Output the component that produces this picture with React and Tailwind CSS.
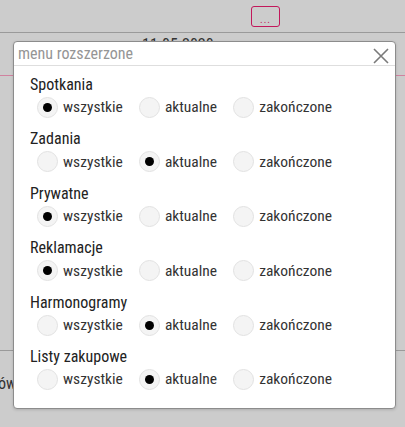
import React, { useState } from "react";

const sections = [
  { name: "Spotkania", value: "wszystkie" },
  { name: "Zadania", value: "aktualne" },
  { name: "Prywatne", value: "wszystkie" },
  { name: "Reklamacje", value: "wszystkie" },
  { name: "Harmonogramy", value: "aktualne" },
  { name: "Listy zakupowe", value: "aktualne" },
];

const options = ["wszystkie", "aktualne", "zakończone"];

function Radio({ checked, label, onClick }) {
  return (
    <button type="button" onClick={onClick} className="flex items-center gap-[5px]">
      <span className="w-[21px] h-[21px] rounded-full bg-[#f4f4f4] border border-[#e2e2e2] flex items-center justify-center">
        {checked && <span className="w-[9px] h-[9px] rounded-full bg-black" />}
      </span>
      <span className="text-[15.5px] leading-[22px] text-[#333]">{label}</span>
    </button>
  );
}

export default function App() {
  const [values, setValues] = useState(sections.map((s) => s.value));

  return (
    <div className="relative w-[405px] h-[427px] bg-[#cccccc] overflow-hidden font-['Roboto_Condensed','Roboto',sans-serif]">
      {/* tło: lista pod oknem */}
      <div className="h-[33px] border-b border-[#9a9a9a] flex items-start">
        <button className="ml-[251px] mt-[6px] w-[29px] h-[21px] rounded-[3px] border border-[#c2185b] text-[#c2185b] text-[10px] leading-[26px] tracking-[1px]">
          ...
        </button>
      </div>
      <div className="h-[43px] border-b border-[#d0829f] pl-[142px] pt-[3px] text-[16px] leading-[18px] text-[#333]">
        11.05.2020 r.
      </div>
      <div className="h-[275px] border-b border-[#9a9a9a]" />
      <div className="pt-[24px] -ml-[2px] text-[16px] leading-[18px] text-[#333]">ów</div>

      {/* menu rozszerzone */}
      <div className="absolute left-[13px] top-[41px] w-[383px] h-[368px] bg-white border border-[#8c8c8c] rounded-[4px] shadow-[0_1px_3px_rgba(0,0,0,0.15)]">
        <div className="h-[24px] border-b border-[#dedede] flex items-center justify-between pl-[4px] pr-[6px]">
          <span className="text-[16px] leading-[18px] text-[#959595]">menu rozszerzone</span>
          <button type="button" className="w-[16px] h-[16px] mt-[4px]">
            <svg viewBox="0 0 16 16" className="w-[16px] h-[16px]" stroke="#7a7a7a" strokeWidth="1.6" fill="none">
              <path d="M1 1 L15 15 M15 1 L1 15" />
            </svg>
          </button>
        </div>
        <div className="pt-[10px] pl-[16px] flex flex-col gap-[12px]">
          {sections.map((s, i) => (
            <div key={s.name} className="flex flex-col gap-[2px]">
              <div className="text-[16px] leading-[18.4px] text-[#222]">{s.name}</div>
              <div className="flex items-center gap-[16px] pl-[7px]">
                {options.map((o) => (
                  <Radio
                    key={o}
                    label={o}
                    checked={values[i] === o}
                    onClick={() => setValues(values.map((v, j) => (j === i ? o : v)))}
                  />
                ))}
              </div>
            </div>
          ))}
        </div>
      </div>
    </div>
  );
}
